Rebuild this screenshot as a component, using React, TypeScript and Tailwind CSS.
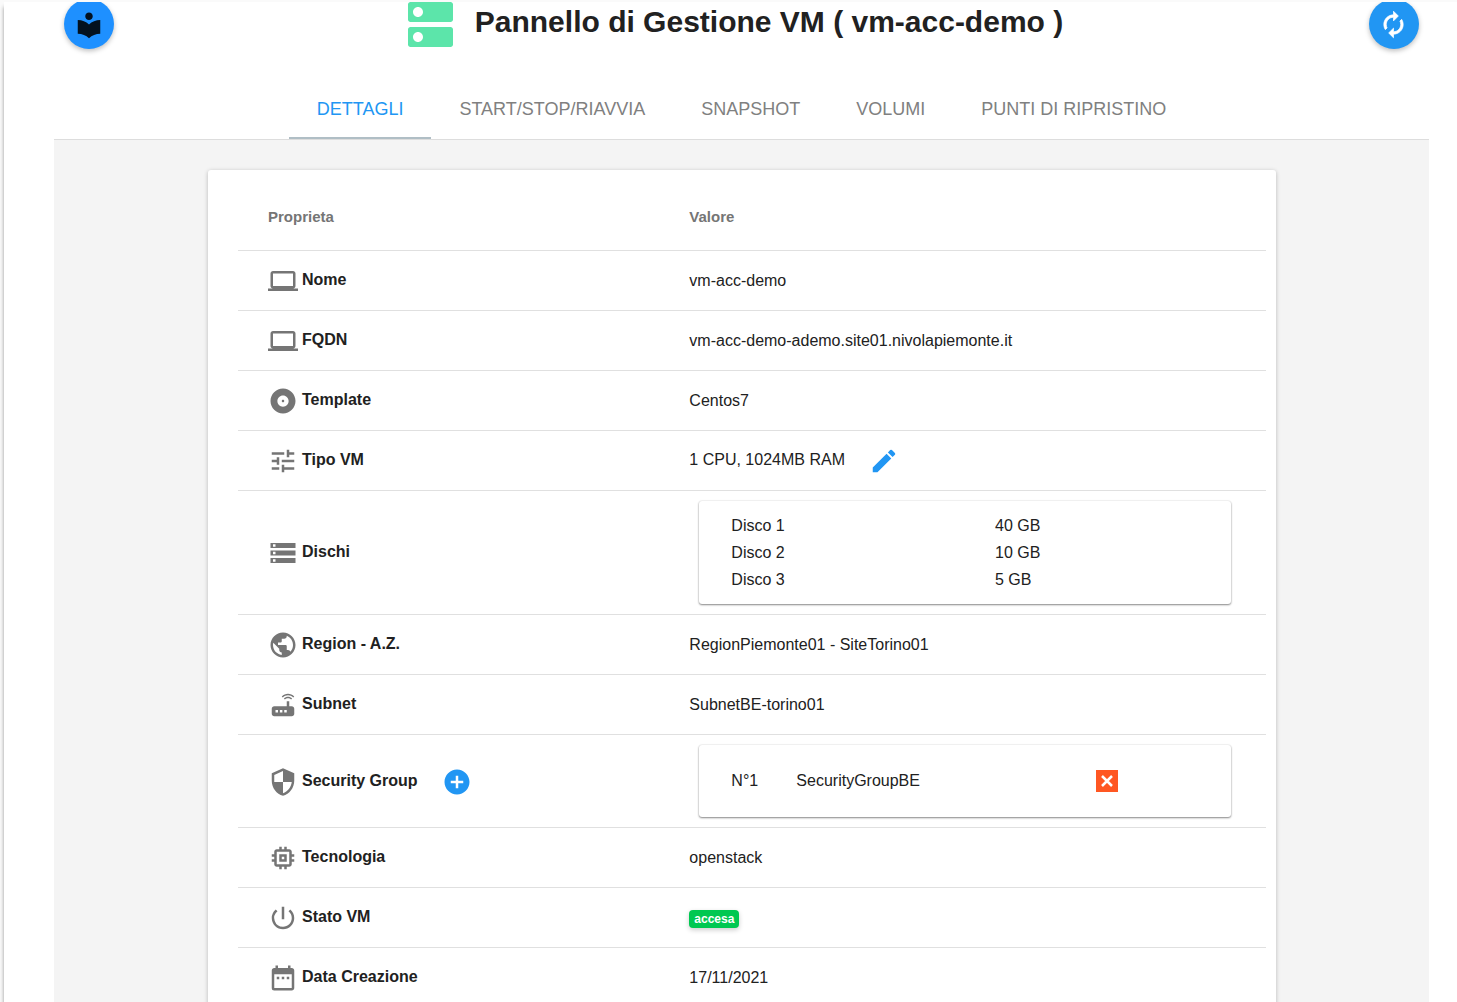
import type { ReactNode } from "react";
import type { IconType } from "react-icons";
import {
  MdAddCircle,
  MdAlbum,
  MdComputer,
  MdDateRange,
  MdEdit,
  MdLocalLibrary,
  MdMemory,
  MdPowerSettingsNew,
  MdPublic,
  MdRouter,
  MdSecurity,
  MdStorage,
  MdTune,
} from "react-icons/md";

const tabs = ["Dettagli", "Start/Stop/Riavvia", "Snapshot", "Volumi", "Punti di ripristino"];

const disks = [
  ["Disco 1", "40 GB"],
  ["Disco 2", "10 GB"],
  ["Disco 3", "5 GB"],
];

const innerCard =
  "mt-2 mb-[10px] ml-[10px] mr-[35px] rounded-[3px] bg-white shadow-[0_1px_2px_rgba(0,0,0,0.45),0_0_2px_rgba(0,0,0,0.14)]";

function ServerLogo() {
  return (
    <svg viewBox="3 3 18 18" className="h-[45px] w-[45px] shrink-0 fill-[#5ce5aa]" aria-hidden="true">
      <path d="M20 13H4c-.55 0-1 .45-1 1v6c0 .55.45 1 1 1h16c.55 0 1-.45 1-1v-6c0-.55-.45-1-1-1zM7 19c-1.1 0-2-.9-2-2s.9-2 2-2 2 .9 2 2-.9 2-2 2zM20 3H4c-.55 0-1 .45-1 1v6c0 .55.45 1 1 1h16c.55 0 1-.45 1-1V4c0-.55-.45-1-1-1zM7 9c-1.1 0-2-.9-2-2s.9-2 2-2 2 .9 2 2-.9 2-2 2z" />
    </svg>
  );
}

function RefreshIcon() {
  return (
    <svg viewBox="0 0 24 24" className="h-[29px] w-[29px] fill-current stroke-current" strokeWidth="0.6" aria-hidden="true">
      <path d="M12 6v3l4-4-4-4v3c-4.42 0-8 3.58-8 8 0 1.57.46 3.03 1.24 4.26L6.7 14.8c-.45-.83-.7-1.79-.7-2.8 0-3.31 2.69-6 6-6zm6.76 1.74L17.3 9.2c.44.84.7 1.79.7 2.8 0 3.31-2.69 6-6 6v-3l-4 4 4 4v-3c4.42 0 8-3.58 8-8 0-1.57-.46-3.03-1.24-4.26z" />
    </svg>
  );
}

function CrossIcon() {
  return (
    <svg viewBox="0 0 12 12" className="h-3 w-3 stroke-current" strokeWidth="2.5" aria-hidden="true">
      <path d="M1 1l10 10M11 1L1 11" />
    </svg>
  );
}

function Row({
  icon: Icon,
  label,
  action,
  children,
}: {
  icon: IconType;
  label: string;
  action?: ReactNode;
  children: ReactNode;
}) {
  return (
    <tr className="h-[60px] border-t border-[#e0e0e0]">
      <th scope="row" className="p-0 pt-0.5 pl-[30px] text-left font-bold">
        <div className="flex items-center">
          <Icon className="mr-1 h-[30px] w-[30px] shrink-0 text-[#757575]" aria-hidden="true" />
          <span className="pb-0.5">{label}</span>
          {action}
        </div>
      </th>
      <td className="p-0 pt-0.5 pl-[30px]">{children}</td>
    </tr>
  );
}

export default function App() {
  return (
    <div className="flex h-screen flex-col overflow-hidden bg-[#fafafa] pt-0.5 pl-1 font-['Liberation_Sans',Arial,sans-serif] text-base text-[#212121]">
      <main className="flex min-h-0 flex-1 flex-col overflow-hidden bg-white pr-7 pl-[50px] shadow-[0_5px_4px_rgba(0,0,0,0.4)]">
        <header className="flex shrink-0 items-start justify-between pr-[10px] pl-[10px]">
          <button
            type="button"
            aria-label="Guida"
            className="-mt-[3px] flex h-[50px] w-[50px] shrink-0 items-center justify-center rounded-full bg-[#1e90ff] pt-0.5 text-[#03111f] shadow-[0_2px_5px_rgba(0,0,0,0.26)]"
          >
            <MdLocalLibrary className="h-[30px] w-[30px]" />
          </button>
          <div className="mr-3 flex items-start gap-[22px]">
            <ServerLogo />
            <h1 className="text-[30px] leading-10 font-bold">Pannello di Gestione VM ( vm-acc-demo )</h1>
          </div>
          <button
            type="button"
            aria-label="Aggiorna"
            className="-mt-[3px] flex h-[50px] w-[50px] shrink-0 items-center justify-center rounded-full bg-[#2196f3] text-white shadow-[0_2px_5px_rgba(0,0,0,0.26)]"
          >
            <RefreshIcon />
          </button>
        </header>

        <nav className="mt-[30px] flex shrink-0 justify-center border-b border-[#dddddd]" role="tablist">
          {tabs.map((tab, i) => (
            <button
              key={tab}
              type="button"
              role="tab"
              aria-selected={i === 0}
              className={
                i === 0
                  ? "h-[60px] border-b-2 border-[#b0bec5] px-7 pt-0.5 text-lg text-[#2196f3] uppercase"
                  : "h-[60px] border-b-2 border-transparent px-7 pt-0.5 text-lg text-[#808080] uppercase"
              }
            >
              {tab}
            </button>
          ))}
        </nav>

        <div className="flex min-h-0 flex-1 flex-col bg-[#f4f4f4] pt-[30px]">
          <section className="mr-[11.15%] ml-[11.2%] flex-1 rounded-[3px] bg-white pr-[10px] pl-[30px] shadow-[0_1px_4px_rgba(0,0,0,0.25)]">
            <table className="w-full table-fixed border-collapse">
              <colgroup>
                <col className="w-[41%]" />
                <col />
              </colgroup>
              <thead>
                <tr className="h-[80px] text-left text-[15px] text-[#757575]">
                  <th scope="col" className="p-0 pt-[14px] pl-[30px]">Proprieta</th>
                  <th scope="col" className="p-0 pt-[14px] pl-[30px]">Valore</th>
                </tr>
              </thead>
              <tbody>
                <Row icon={MdComputer} label="Nome">vm-acc-demo</Row>
                <Row icon={MdComputer} label="FQDN">vm-acc-demo-ademo.site01.nivolapiemonte.it</Row>
                <Row icon={MdAlbum} label="Template">Centos7</Row>
                <Row icon={MdTune} label="Tipo VM">
                  <div className="flex items-center gap-6">
                    <span className="pb-0.5">1 CPU, 1024MB RAM</span>
                    <button type="button" aria-label="Modifica tipo VM" className="text-[#2196f3]">
                      <MdEdit className="h-[30px] w-[30px]" />
                    </button>
                  </div>
                </Row>
                <Row icon={MdStorage} label="Dischi">
                  <div className={innerCard}>
                    <table className="w-full table-fixed">
                      <tbody className="leading-[27px] before:block before:h-[11px] after:block after:h-[11px]">
                        {disks.map(([name, size]) => (
                          <tr key={name}>
                            <td className="p-0 pl-8">{name}</td>
                            <td className="p-0 pl-[30px]">{size}</td>
                          </tr>
                        ))}
                      </tbody>
                    </table>
                  </div>
                </Row>
                <Row icon={MdPublic} label="Region - A.Z.">RegionPiemonte01 - SiteTorino01</Row>
                <Row icon={MdRouter} label="Subnet">SubnetBE-torino01</Row>
                <Row
                  icon={MdSecurity}
                  label="Security Group"
                  action={
                    <button type="button" aria-label="Aggiungi security group" className="ml-6 text-[#2196f3]">
                      <MdAddCircle className="h-[30px] w-[30px]" />
                    </button>
                  }
                >
                  <div className={innerCard}>
                    <div className="flex h-[72px] items-center pl-8">
                      <span className="w-[65px]">N°1</span>
                      <span className="w-[300px]">SecurityGroupBE</span>
                      <button
                        type="button"
                        aria-label="Rimuovi SecurityGroupBE"
                        className="flex h-[22px] w-[22px] items-center justify-center bg-[#ff5722] text-white"
                      >
                        <CrossIcon />
                      </button>
                    </div>
                  </div>
                </Row>
                <Row icon={MdMemory} label="Tecnologia">openstack</Row>
                <Row icon={MdPowerSettingsNew} label="Stato VM">
                  <span className="inline-block rounded bg-[#00c851] px-[5px] text-xs leading-[18px] font-bold text-white shadow-[0_2px_5px_rgba(0,0,0,0.2)]">
                    accesa
                  </span>
                </Row>
                <Row icon={MdDateRange} label="Data Creazione">17/11/2021</Row>
              </tbody>
            </table>
          </section>
        </div>
      </main>
    </div>
  );
}
